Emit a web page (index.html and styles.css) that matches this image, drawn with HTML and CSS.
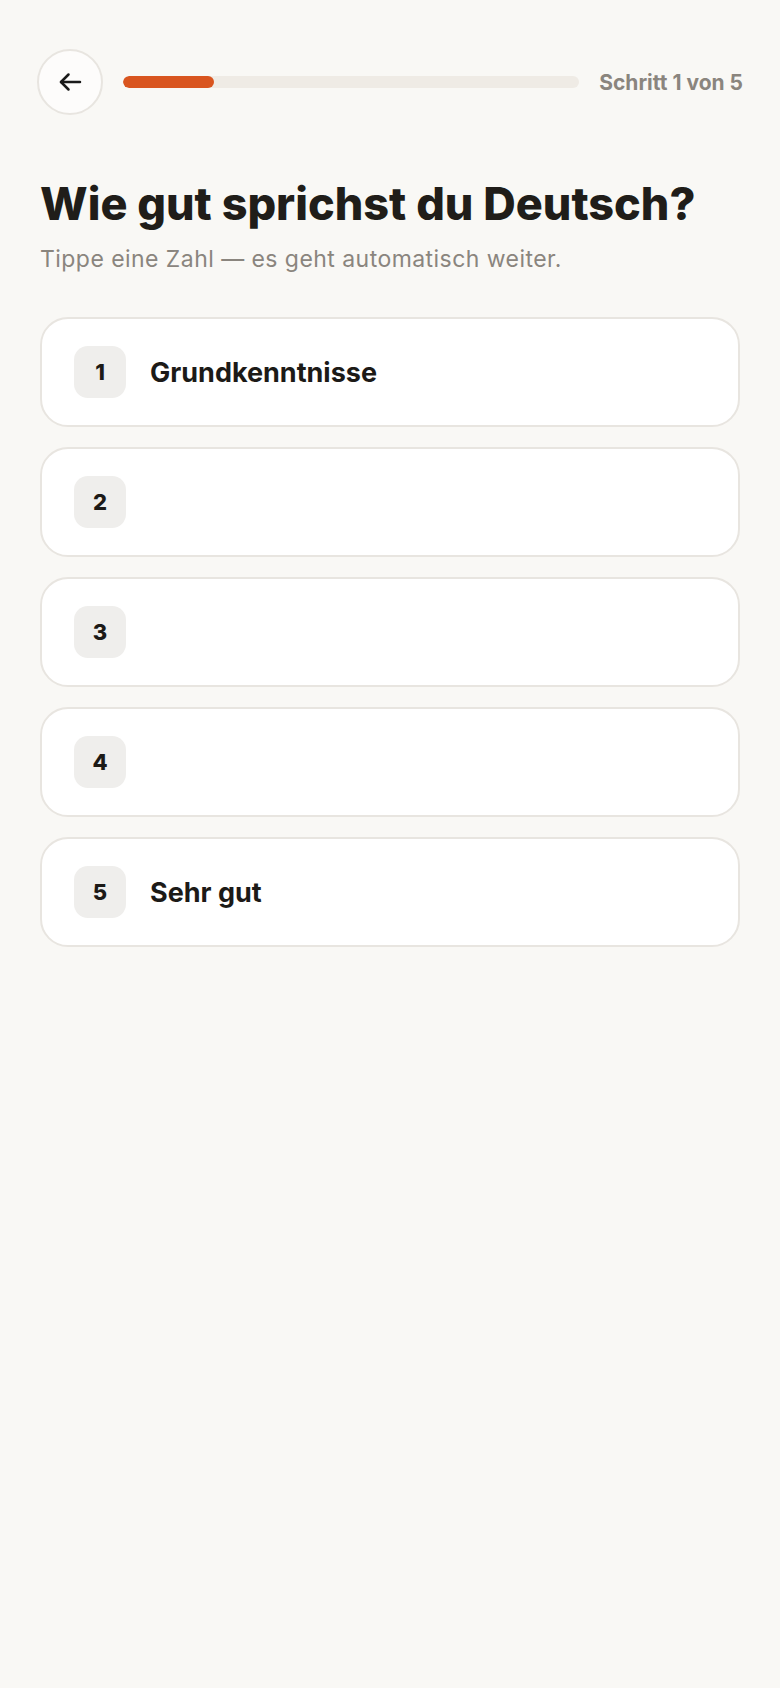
FILE: index.html
```html
<!DOCTYPE html>
<html lang="de">
<head>
    <meta charset="UTF-8">
    <meta name="viewport" content="width=device-width, initial-scale=1.0">
    <title>Wie gut sprichst du Deutsch?</title>
    <link rel="stylesheet" href="styles.css">
</head>
<body>
    <div class="header">
        <button class="back" aria-label="Zurück">
            <svg width="24" height="20" viewBox="0 0 24 20" fill="none" stroke="#1a1a1a" stroke-width="2.5" stroke-linecap="round" stroke-linejoin="round">
                <path d="M22 10H3"/>
                <path d="M10.5 2.5L3 10l7.5 7.5"/>
            </svg>
        </button>
        <div class="progress"><div class="progress-fill" style="width: 20%"></div></div>
        <span class="step">Schritt 1 von 5</span>
    </div>

    <div class="content">
        <h1>Wie gut sprichst du Deutsch?</h1>
        <p class="hint">Tippe eine Zahl — es geht automatisch weiter.</p>

        <div class="options">
            <button class="option"><span class="num">1</span><span class="label">Grundkenntnisse</span></button>
            <button class="option"><span class="num">2</span><span class="label"></span></button>
            <button class="option"><span class="num">3</span><span class="label"></span></button>
            <button class="option"><span class="num">4</span><span class="label"></span></button>
            <button class="option"><span class="num">5</span><span class="label">Sehr gut</span></button>
        </div>
    </div>
</body>
</html>
```

FILE: styles.css
```css
body {
    margin: 0;
    padding: 0;
    background-color: #f9f8f5;
    font-family: "Inter", "Noto Sans", sans-serif;
    color: #201d19;
}
.header {
    display: flex;
    align-items: center;
    gap: 20px;
    padding: 49px 37px 0 37px;
}
.back {
    width: 66px;
    height: 66px;
    flex: none;
    border-radius: 50%;
    border: 2px solid #e8e5e0;
    background-color: #fdfcfb;
    display: flex;
    align-items: center;
    justify-content: center;
    padding: 0;
    cursor: pointer;
}
.progress {
    flex: 1;
    height: 12px;
    border-radius: 6px;
    background-color: #efebe5;
    overflow: hidden;
}
.progress-fill {
    height: 100%;
    border-radius: 6px;
    background-color: #d9551f;
}
.step {
    font-size: 21px;
    font-weight: 700;
    color: #8a857e;
}
.content {
    padding: 0 40px;
}
h1 {
    margin: 62px 0 0 0;
    font-size: 45px;
    font-weight: 800;
    line-height: 54px;
    color: #201d19;
}
.hint {
    margin: 14px 0 0 0;
    font-size: 23px;
    line-height: 28px;
    color: #8a857e;
    letter-spacing: 0.45px;
}
.options {
    display: flex;
    flex-direction: column;
    gap: 20px;
    margin-top: 44px;
}
.option {
    display: flex;
    align-items: center;
    gap: 24px;
    height: 110px;
    padding: 0 32px;
    background-color: #ffffff;
    border: 2px solid #e8e5e0;
    border-radius: 28px;
    font-family: inherit;
    text-align: left;
    cursor: pointer;
}
.num {
    width: 52px;
    height: 52px;
    flex: none;
    border-radius: 14px;
    background-color: #efeeec;
    display: flex;
    align-items: center;
    justify-content: center;
    font-size: 22px;
    font-weight: 800;
    color: #1c1a17;
}
.label {
    font-size: 27px;
    font-weight: 700;
    color: #1c1a17;
}
```
